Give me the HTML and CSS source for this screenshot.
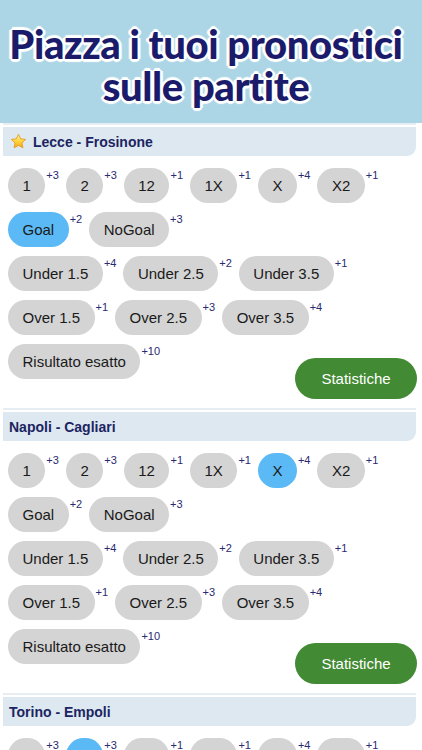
FILE: index.html
```html
<!DOCTYPE html>
<html lang="it">
<head>
<meta charset="utf-8">
<title>Pronostici</title>
<link rel="stylesheet" href="styles.css">
</head>
<body>
<header class="banner">
  <h1 class="banner-title"><span class="line">Piazza i tuoi pronostici</span><span class="line">sulle partite</span></h1>
</header>

<main class="list">
  <section class="match">
    <h2 class="match-head">
      <svg class="star" viewBox="0 0 24 24" width="17" height="17" aria-hidden="true">
        <defs>
          <linearGradient id="sg" x1="0" y1="0" x2="0" y2="1">
            <stop offset="0" stop-color="#fff3a0"/>
            <stop offset="0.55" stop-color="#ffd23a"/>
            <stop offset="1" stop-color="#f4a51c"/>
          </linearGradient>
        </defs>
        <path d="M12 1.8l3.05 6.4 7 .9-5.15 4.85 1.3 6.95L12 17.5l-6.2 3.4 1.3-6.95L1.95 9.1l7-.9z" fill="url(#sg)" stroke="#e39a1a" stroke-width="1.2" stroke-linejoin="round"/>
      </svg>
      <span>Lecce - Frosinone</span>
    </h2>
    <div class="rows">
      <div class="row">
        <div class="opt"><span class="chip">1</span><span class="pts">+3</span></div>
        <div class="opt"><span class="chip">2</span><span class="pts">+3</span></div>
        <div class="opt"><span class="chip">12</span><span class="pts">+1</span></div>
        <div class="opt"><span class="chip">1X</span><span class="pts">+1</span></div>
        <div class="opt"><span class="chip">X</span><span class="pts">+4</span></div>
        <div class="opt"><span class="chip">X2</span><span class="pts">+1</span></div>
      </div>
      <div class="row">
        <div class="opt"><span class="chip sel">Goal</span><span class="pts">+2</span></div>
        <div class="opt"><span class="chip">NoGoal</span><span class="pts">+3</span></div>
      </div>
      <div class="row">
        <div class="opt"><span class="chip">Under 1.5</span><span class="pts">+4</span></div>
        <div class="opt"><span class="chip">Under 2.5</span><span class="pts">+2</span></div>
        <div class="opt"><span class="chip">Under 3.5</span><span class="pts">+1</span></div>
      </div>
      <div class="row">
        <div class="opt"><span class="chip">Over 1.5</span><span class="pts">+1</span></div>
        <div class="opt"><span class="chip">Over 2.5</span><span class="pts">+3</span></div>
        <div class="opt"><span class="chip">Over 3.5</span><span class="pts">+4</span></div>
      </div>
      <div class="row last">
        <div class="opt"><span class="chip">Risultato esatto</span><span class="pts">+10</span></div>
        <button class="stats">Statistiche</button>
      </div>
    </div>
  </section>

  <section class="match">
    <h2 class="match-head"><span>Napoli - Cagliari</span></h2>
    <div class="rows">
      <div class="row">
        <div class="opt"><span class="chip">1</span><span class="pts">+3</span></div>
        <div class="opt"><span class="chip">2</span><span class="pts">+3</span></div>
        <div class="opt"><span class="chip">12</span><span class="pts">+1</span></div>
        <div class="opt"><span class="chip">1X</span><span class="pts">+1</span></div>
        <div class="opt"><span class="chip sel">X</span><span class="pts">+4</span></div>
        <div class="opt"><span class="chip">X2</span><span class="pts">+1</span></div>
      </div>
      <div class="row">
        <div class="opt"><span class="chip">Goal</span><span class="pts">+2</span></div>
        <div class="opt"><span class="chip">NoGoal</span><span class="pts">+3</span></div>
      </div>
      <div class="row">
        <div class="opt"><span class="chip">Under 1.5</span><span class="pts">+4</span></div>
        <div class="opt"><span class="chip">Under 2.5</span><span class="pts">+2</span></div>
        <div class="opt"><span class="chip">Under 3.5</span><span class="pts">+1</span></div>
      </div>
      <div class="row">
        <div class="opt"><span class="chip">Over 1.5</span><span class="pts">+1</span></div>
        <div class="opt"><span class="chip">Over 2.5</span><span class="pts">+3</span></div>
        <div class="opt"><span class="chip">Over 3.5</span><span class="pts">+4</span></div>
      </div>
      <div class="row last">
        <div class="opt"><span class="chip">Risultato esatto</span><span class="pts">+10</span></div>
        <button class="stats">Statistiche</button>
      </div>
    </div>
  </section>

  <section class="match">
    <h2 class="match-head"><span>Torino - Empoli</span></h2>
    <div class="rows">
      <div class="row">
        <div class="opt"><span class="chip">1</span><span class="pts">+3</span></div>
        <div class="opt"><span class="chip sel">2</span><span class="pts">+3</span></div>
        <div class="opt"><span class="chip">12</span><span class="pts">+1</span></div>
        <div class="opt"><span class="chip">1X</span><span class="pts">+1</span></div>
        <div class="opt"><span class="chip">X</span><span class="pts">+4</span></div>
        <div class="opt"><span class="chip">X2</span><span class="pts">+1</span></div>
      </div>
    </div>
  </section>
</main>
</body>
</html>
```

FILE: styles.css
```css
html, body {
  margin: 0;
  padding: 0;
  overflow: hidden;
  background: #ffffff;
}

body {
  font-family: "Liberation Sans", Arial, sans-serif;
  color: #1a1a1a;
}

.banner {
  height: 123px;
  box-sizing: border-box;
  padding-top: 23px;
  background: #acd6e5;
}

.banner-title {
  margin: 0;
  display: flex;
  flex-direction: column;
  align-items: center;
  padding-right: 10px;
  font-family: Lato, "Open Sans", sans-serif;
  font-weight: 900;
  font-size: 40px;
  line-height: 42px;
  letter-spacing: -0.4px;
  color: #1b1b6b;
  white-space: nowrap;
  text-shadow:
    2px 0 0 #fff, -2px 0 0 #fff, 0 2px 0 #fff, 0 -2px 0 #fff,
    1.5px 1.5px 0 #fff, -1.5px 1.5px 0 #fff, 1.5px -1.5px 0 #fff, -1.5px -1.5px 0 #fff,
    3px 0 1px #fff, -3px 0 1px #fff, 0 3px 1px #fff, 0 -3px 1px #fff;
}

.line {
  display: block;
}

.list {
  padding: 0 6px 0 3px;
}

.match {
  border-top: 2px solid #e6eef3;
  padding-top: 2px;
}

.match-head {
  margin: 0;
  height: 29px;
  box-sizing: border-box;
  display: flex;
  align-items: center;
  gap: 6px;
  padding-left: 6px;
  background: #dde8f0;
  border-radius: 0 0 9px 0;
  font-size: 14px;
  font-weight: 700;
  color: #1c2462;
}

.star {
  flex: none;
  margin-left: 1px;
}

.rows {
  display: flex;
  flex-direction: column;
  gap: 9px;
  padding: 12px 0 9px 5px;
}

.row {
  display: flex;
  align-items: flex-start;
  gap: 7px;
}

.opt {
  display: flex;
  align-items: flex-start;
}

.chip {
  display: inline-flex;
  align-items: center;
  height: 35px;
  padding: 0 14.5px;
  border-radius: 18px;
  background: #d4d4d4;
  font-size: 15px;
  color: #1a1a1a;
  white-space: nowrap;
}

.chip.sel {
  background: #5bb9f5;
}

.pts {
  margin: 1px 0 0 1px;
  font-size: 11px;
  line-height: 13px;
  color: #2a2a72;
}

.row.last {
  justify-content: space-between;
}

.stats {
  margin-top: 14px;
  height: 41px;
  width: 122px;
  border: none;
  border-radius: 21px;
  background: #428a33;
  color: #ffffff;
  font-family: "Liberation Sans", Arial, sans-serif;
  font-size: 15px;
  margin-right: -1px;
}
```
